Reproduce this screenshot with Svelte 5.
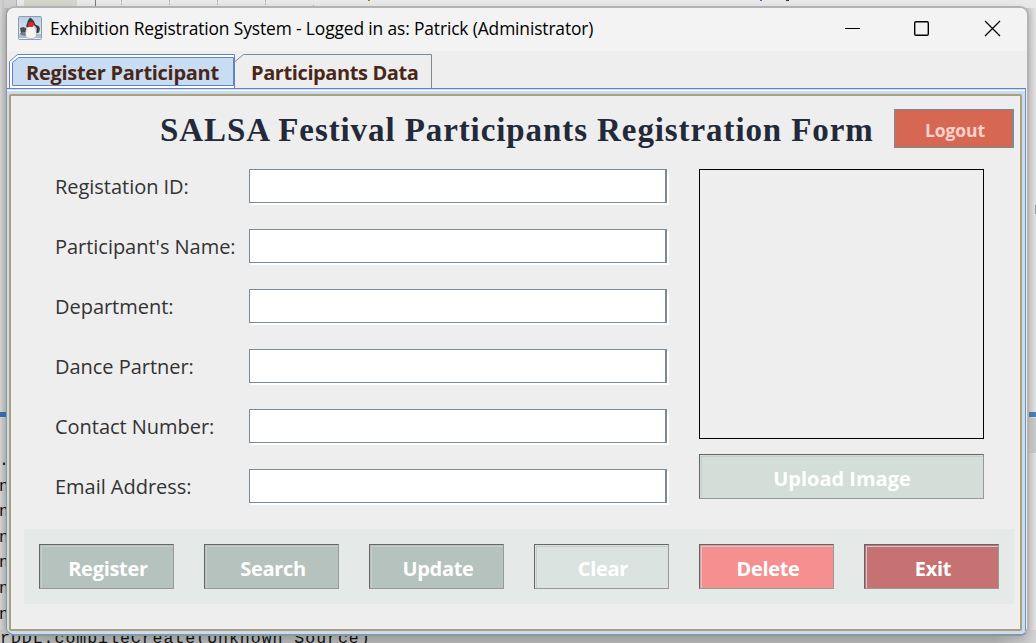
<script>
  const fields = ['Registation ID:', "Participant's Name:", 'Department:', 'Dance Partner:', 'Contact Number:', 'Email Address:'];
  const actions = [
    { label: 'Register', tone: 'sage' },
    { label: 'Search', tone: 'sage' },
    { label: 'Update', tone: 'sage' },
    { label: 'Clear', tone: 'pale' },
    { label: 'Delete', tone: 'coral' },
    { label: 'Exit', tone: 'brick' }
  ];
  const trace = ['.', 'n', 'n', 'n', 'n', 'n', 'n'];
</script>

<div class="desktop">
  <svg class="editor" width="1036" height="643" viewBox="0 0 1036 643">
    <defs>
      <linearGradient id="side" x1="0" x2="1" y1="0" y2="0">
        <stop offset="0" stop-color="#d4d4d4" /><stop offset="1" stop-color="#a9a9a9" />
      </linearGradient>
      <linearGradient id="right" x1="0" x2="1" y1="0" y2="0">
        <stop offset="0" stop-color="#c6c6c6" /><stop offset="1" stop-color="#e4e4e4" />
      </linearGradient>
      <linearGradient id="base" x1="0" x2="1" y1="0" y2="0">
        <stop offset="0" stop-color="#c6c6c6" /><stop offset=".05" stop-color="#b4b4b4" />
        <stop offset=".96" stop-color="#b4b4b4" /><stop offset="1" stop-color="#d2d2d2" />
      </linearGradient>
    </defs>
    <rect width="1036" height="643" fill="#e9e9e9" />
    <rect y="0" width="10" height="643" fill="url(#side)" />
    <rect x="4" width="13" height="8" fill="#d0d0d0" />
    <path d="M16.500 0v8" stroke="#b5b5b5" />
    <rect x="24" width="53" height="8" fill="#d5d5cd" />
    <path d="M95.500 0v8" stroke="#777" />
    <path d="M121.500 0v8M169.500 0v8M217.500 0v8M265.500 0v8M313.500 5v3" stroke="#b2b2b2" stroke-dasharray="2 1" />
    <path d="M368 .5h2" stroke="#b66a20" /><path d="M786 .5h3" stroke="#333" /><path d="M760 .5h2" stroke="#36c" />
    <rect x="1026" y="8" width="10" height="635" fill="url(#right)" />
    <rect x="1026" y="418" width="10" height="35" fill="#c8c8c8" />
    <rect y="412" width="8" height="5" fill="#3570ab" />
    <rect x="1028" y="412" width="8" height="5" fill="#4a80b6" />
    <path d="M1035.500 205v9" stroke="#9a9a9a" />
    <rect y="630" width="1036" height="13" fill="url(#base)" />
  </svg>
  <div class="trace">{#each trace as t}<span>{t}</span>{/each}</div>
  <div class="source">rDDL.compileCreate(Unknown Source)</div>

  <main class="window">
    <header class="titlebar">
      <svg class="duke" width="24" height="24" viewBox="0 0 24 24">
        <defs><linearGradient id="tile" x2="0" y2="1"><stop stop-color="#b9cfe2" /><stop offset="1" stop-color="#e9eef2" /></linearGradient></defs>
        <rect x=".5" y=".5" width="23" height="23" rx="1" fill="url(#tile)" stroke="#85a0b8" />
        <path d="M1 18h22v4H1z" fill="#b4bdc6" />
        <path d="M2 12l3-1 3 1v4l-5 1zM18 9l3 1 1 3-1 4-2-1z" fill="#4a4d50" />
        <path d="M2 17l6-1 1 4-6-1z" fill="#6f7a85" />
        <path d="M10 9c-2 4-3 8-2 12 3 2 7 2 10 0 1-4 0-8-2-12z" fill="#f4f4f2" stroke="#a4a8aa" stroke-width=".6" />
        <path d="M12 1.500l-2 3-2 6 2 1 3-3 4 0c0-3-2-5-5-7z" fill="#3a3c40" />
        <path d="M16 8l4 4-1 5" stroke="#2d2f32" stroke-width="1.400" fill="none" />
        <ellipse cx="13" cy="8.500" rx="2.900" ry="2.600" fill="#ee2422" />
      </svg>
      <span class="caption">Exhibition Registration System - Logged in as: Patrick (Administrator)</span>
      <svg class="controls" width="160" height="20" viewBox="0 0 160 20" fill="none" stroke="#000">
        <path d="M2 10.500h15" />
        <rect x="71.700" y="3.700" width="13.600" height="13.600" rx="1.200" stroke-width="1.400" />
        <path d="M142 3l15 15M157 3l-15 15" stroke-width="1.300" />
      </svg>
    </header>

    <nav class="tabs">
      <div class="tab active">
        <svg width="226" height="38" viewBox="0 0 226 38" fill="none">
          <path d="M1 37V10L9 3H226V37z" fill="#fff" />
          <path d="M3 34V11L11 6H224V34z" fill="#c8ddf2" />
          <path d="M.5 37V10.500L8.500 3.500H225.500V37M3.500 34.500V11.500L9.500 6.500H224.500V34.500z" stroke="#6382bf" />
        </svg>
        <span>Register Participant</span>
      </div>
      <div class="tab">
        <svg width="197" height="38" viewBox="0 0 197 38" fill="none">
          <path d="M0 10.500L8.500 3.500H196.500V37" stroke="#7a8a99" />
        </svg>
        <span>Participants Data</span>
      </div>
    </nav>

    <section class="pane">
      <div class="form">
        <div class="head">
          <h1>SALSA Festival Participants Registration Form</h1>
          <button class="logout">Logout</button>
        </div>
        <div class="body">
          <div class="fields">
            {#each fields as f}
              <label><span>{f}</span><input type="text" /></label>
            {/each}
          </div>
          <aside>
            <div class="photo"></div>
            <button class="btn upload">Upload Image</button>
          </aside>
        </div>
        <div class="actions">
          {#each actions as a}
            <button class="btn {a.tone}">{a.label}</button>
          {/each}
        </div>
      </div>
    </section>
  </main>
</div>

<style>
  :global(body) { margin: 0; overflow: hidden; }
  * { box-sizing: border-box; }
  .desktop { position: relative; width: 1036px; height: 643px; overflow: hidden; font-family: "Open Sans", "Noto Sans", sans-serif; }
  .editor { position: absolute; left: 0; top: 0; }
  .trace, .source { position: absolute; left: -1px; font: 16.500px "Liberation Mono", monospace; color: #111; white-space: pre; }
  .trace { top: 449px; display: flex; flex-direction: column; }
  .trace span { height: 25.600px; line-height: 24px; }
  .source { top: 629px; left: 0; line-height: 20px; letter-spacing: 1px; }
  .window { position: absolute; left: 6px; top: 6px; width: 1023px; height: 630px; display: flex; flex-direction: column; background: #eee; border: 2px solid #b3b3b3; border-left: 1px solid #949494; border-bottom-color: #8798a5; border-radius: 9px; overflow: hidden; box-shadow: 0 3px 8px rgba(0,0,0,.15); }
  .titlebar { height: 43px; flex: none; display: flex; align-items: center; padding: 0 24px 0 11px; background: #f3f3f3; }
  .duke { flex: none; margin-bottom: 3px; }
  .caption { margin-left: 8px; font-size: 17.400px; color: #000; white-space: nowrap; letter-spacing: -.13px; margin-bottom: 3px; }
  .controls { margin-left: auto; margin-bottom: 3px; }
  .tabs { height: 37px; flex: none; display: flex; padding-left: 2px; }
  .tab { position: relative; width: 197px; height: 37px; font-weight: 700; font-size: 20px; letter-spacing: -.4px; color: #4a2618; }
  .tab.active { width: 226px; letter-spacing: -.29px; }
  .tab svg { position: absolute; left: 0; top: 0; }
  .tab span { position: relative; display: block; line-height: 43px; white-space: nowrap; padding-left: 16px; }
  .tab.active span { padding-left: 17px; }
  .pane { flex: 1; min-height: 0; border-top: 1px solid #6382bf; border-right: 1px solid #7a8fae; padding: 5px 3px 3px 2px; background: linear-gradient(#c8ddf2 1px, #fff 1px 2px, #c8ddf2 2px); margin-right: 1px; }
  .form { width: 1013px; height: 537px; border: 2px solid #ab9f7c; border-radius: 2px; background: #eee; padding: 13px 6px 0 13px; }
  .head { display: flex; justify-content: flex-end; height: 60px; }
  h1 { margin: -1px 0 0; width: 734px; font: 700 33px/44px "Liberation Serif", serif; letter-spacing: .91px; color: #232938; white-space: nowrap; }
  button { padding: 0; border-radius: 0; font-family: inherit; font-weight: 700; letter-spacing: -.3px; color: #fff; }
  .logout { width: 120px; height: 39px; border: 1px solid #7a8a99; border-right-width: 2px; background: #d66853; color: #fcd0cb; font-size: 17.500px; padding: 3px 0 0 3px; letter-spacing: -.1px; }
  .body { display: flex; height: 360px; padding-left: 31px; }
  .fields { display: grid; grid-auto-rows: 60px; width: 644px; }
  label { display: flex; font-size: 20px; line-height: 35px; letter-spacing: -.03px; color: #333; white-space: nowrap; }
  label span { width: 194px; flex: none; }
  input { width: 418px; height: 34px; padding: 0 6px; border: 1px solid #7a8a99; border-right-width: 2px; background: #fff; box-shadow: 2px 2px 0 #fff; }
  aside { width: 285px; display: flex; flex-direction: column; gap: 15px; }
  .photo { height: 270px; border: 1px solid #000; }
  .btn { --face: #b5c2bd; height: 45px; border: 1px solid; border-color: #666 #999 #999 #666; background: var(--face); box-shadow: inset 1px 1px 0 var(--face), inset 2px 2px 0 #c8cccb; font-size: 20px; line-height: 43px; padding: 4px 0 0 3px; display: flex; align-items: center; justify-content: center; }
  .upload { --face: #d3ded9; width: 285px; padding-left: 1px; letter-spacing: 0; }
  .actions { width: 990px; height: 75px; padding: 15px; display: flex; gap: 30px; background: #e5eae8; }
  .actions .btn { width: 135px; }
  .pale { --face: #dae3df; }
  .coral { --face: #f68f8f; }
  .brick { --face: #c77272; }
</style>
